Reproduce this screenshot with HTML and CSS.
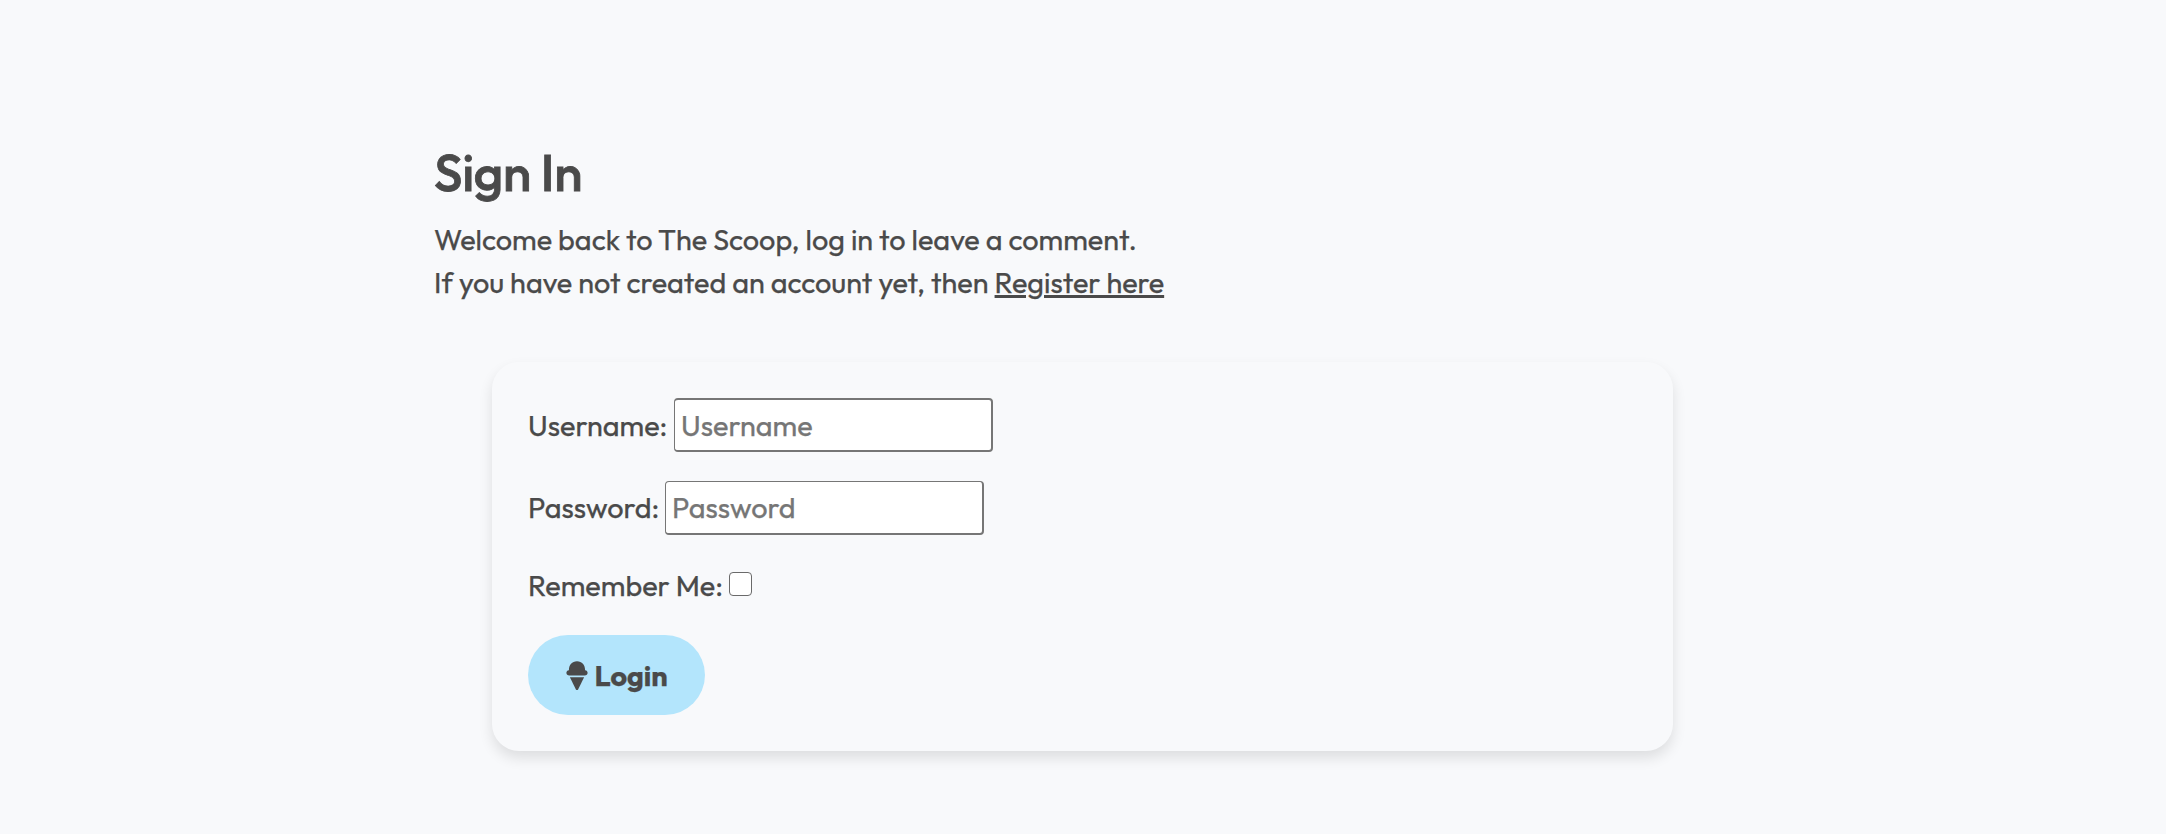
FILE: index.html
```html
<!DOCTYPE html>
<html lang="en">
<head>
<meta charset="utf-8">
<title>Sign In</title>
<link rel="stylesheet" href="styles.css">
</head>
<body>
<main class="page">
  <h1 class="title">Sign In</h1>
  <p class="intro">Welcome back to The Scoop, log in to leave a comment.<br>If you have not created an account yet, then <a class="register" href="#">Register here</a></p>
  <form class="card">
    <div class="field"><label class="label-user" for="user">Username:</label><input class="input input-user" id="user" type="text" placeholder="Username"></div>
    <div class="field"><label class="label-pass" for="pass">Password:</label><input class="input input-pass" id="pass" type="password" placeholder="Password"></div>
    <div class="remember"><label class="label-remember" for="remember">Remember Me:</label><input class="checkbox" id="remember" type="checkbox"></div>
    <button class="login" type="button">
      <svg class="cone" viewBox="0 0 22 29" aria-hidden="true"><path d="M2.900 9.200C2.900 4 6 .3 11 .3s8.100 3.700 8.100 8.900c1.600.2 2.500 1.200 2.500 2.600 0 1.700-1.200 2.800-2.900 2.800H3.300C1.600 14.600.4 13.500.4 11.800c0-1.400.9-2.400 2.500-2.600z"/><path d="M3.900 16.300h14.200l-6 12.100c-.5 1-1.700 1-2.200 0z"/></svg>
      <span>Login</span>
    </button>
  </form>
</main>
</body>
</html>
```
FILE: styles.css
```css
* { box-sizing: border-box; }
body {
  margin: 0;
  min-height: 834px;
  background: #f8f9fb;
  color: #4a4a4a;
  font-family: Outfit, Lato, sans-serif;
  font-size: 28.8px;
  line-height: 43.2px;
  -webkit-text-stroke: .25px currentColor;
}
.page { width: 1300px; min-height: 834px; margin: 0 auto; padding: 140px 0 60px 1px; }
.title {
  margin: 0 0 13px;
  font-size: 51.3px;
  line-height: 64px;
  font-weight: 500;
  letter-spacing: -.35px;
  -webkit-text-stroke: .8px currentColor;
}
.intro { margin: 0 0 58px; white-space: nowrap; padding-top: 1px; }
.register { color: inherit; text-decoration-thickness: 2.5px; }
.card {
  display: flex;
  flex-direction: column;
  align-items: flex-start;
  width: 1181px;
  height: 389px;
  margin: 0 0 0 58px;
  padding: 36px;
  border-radius: 27px;
  box-shadow: 0 7px 14px rgba(0, 0, 0, .11);
}
.field { display: flex; align-items: center; flex: none; height: 54px; margin-bottom: 29px; }
.field label, .remember label { white-space: nowrap; flex: none; }
.label-user { width: 146px; }
.label-pass { width: 137px; padding-bottom: 2px; }
.label-remember { width: 201px; }
.input {
  width: 319px;
  height: 54px;
  padding: 2px 5px 2px 6px;
  border: 1px solid #767676;
  border-right-width: 2px;
  border-bottom-width: 2px;
  border-radius: 4px;
  background: #fff;
  font: inherit;
  -webkit-text-stroke: inherit;
}
.input-user { border-top-width: 2px; padding-top: 1px; }
.input-pass { padding: 1px 5px 3px 6px; }
.input::placeholder { color: #767676; }
.remember { display: flex; align-items: center; flex: none; height: 43px; margin-bottom: 28px; }
.checkbox {
  appearance: none;
  width: 23px;
  height: 24px;
  margin: 0 0 4px;
  border: 1.5px solid #6a6a6a;
  border-radius: 4px;
  background: #fff;
}
.login {
  display: flex;
  align-items: center;
  flex: none;
  width: 177px;
  height: 80px;
  padding: 0 0 0 37.500px;
  border: 0;
  border-radius: 40px;
  background: #b3e5fc;
  color: #4a4a4a;
  font: inherit;
  font-weight: 700;
}
.cone { width: 22px; height: 29px; margin: 0 7px 0 0; fill: currentColor; }
```
